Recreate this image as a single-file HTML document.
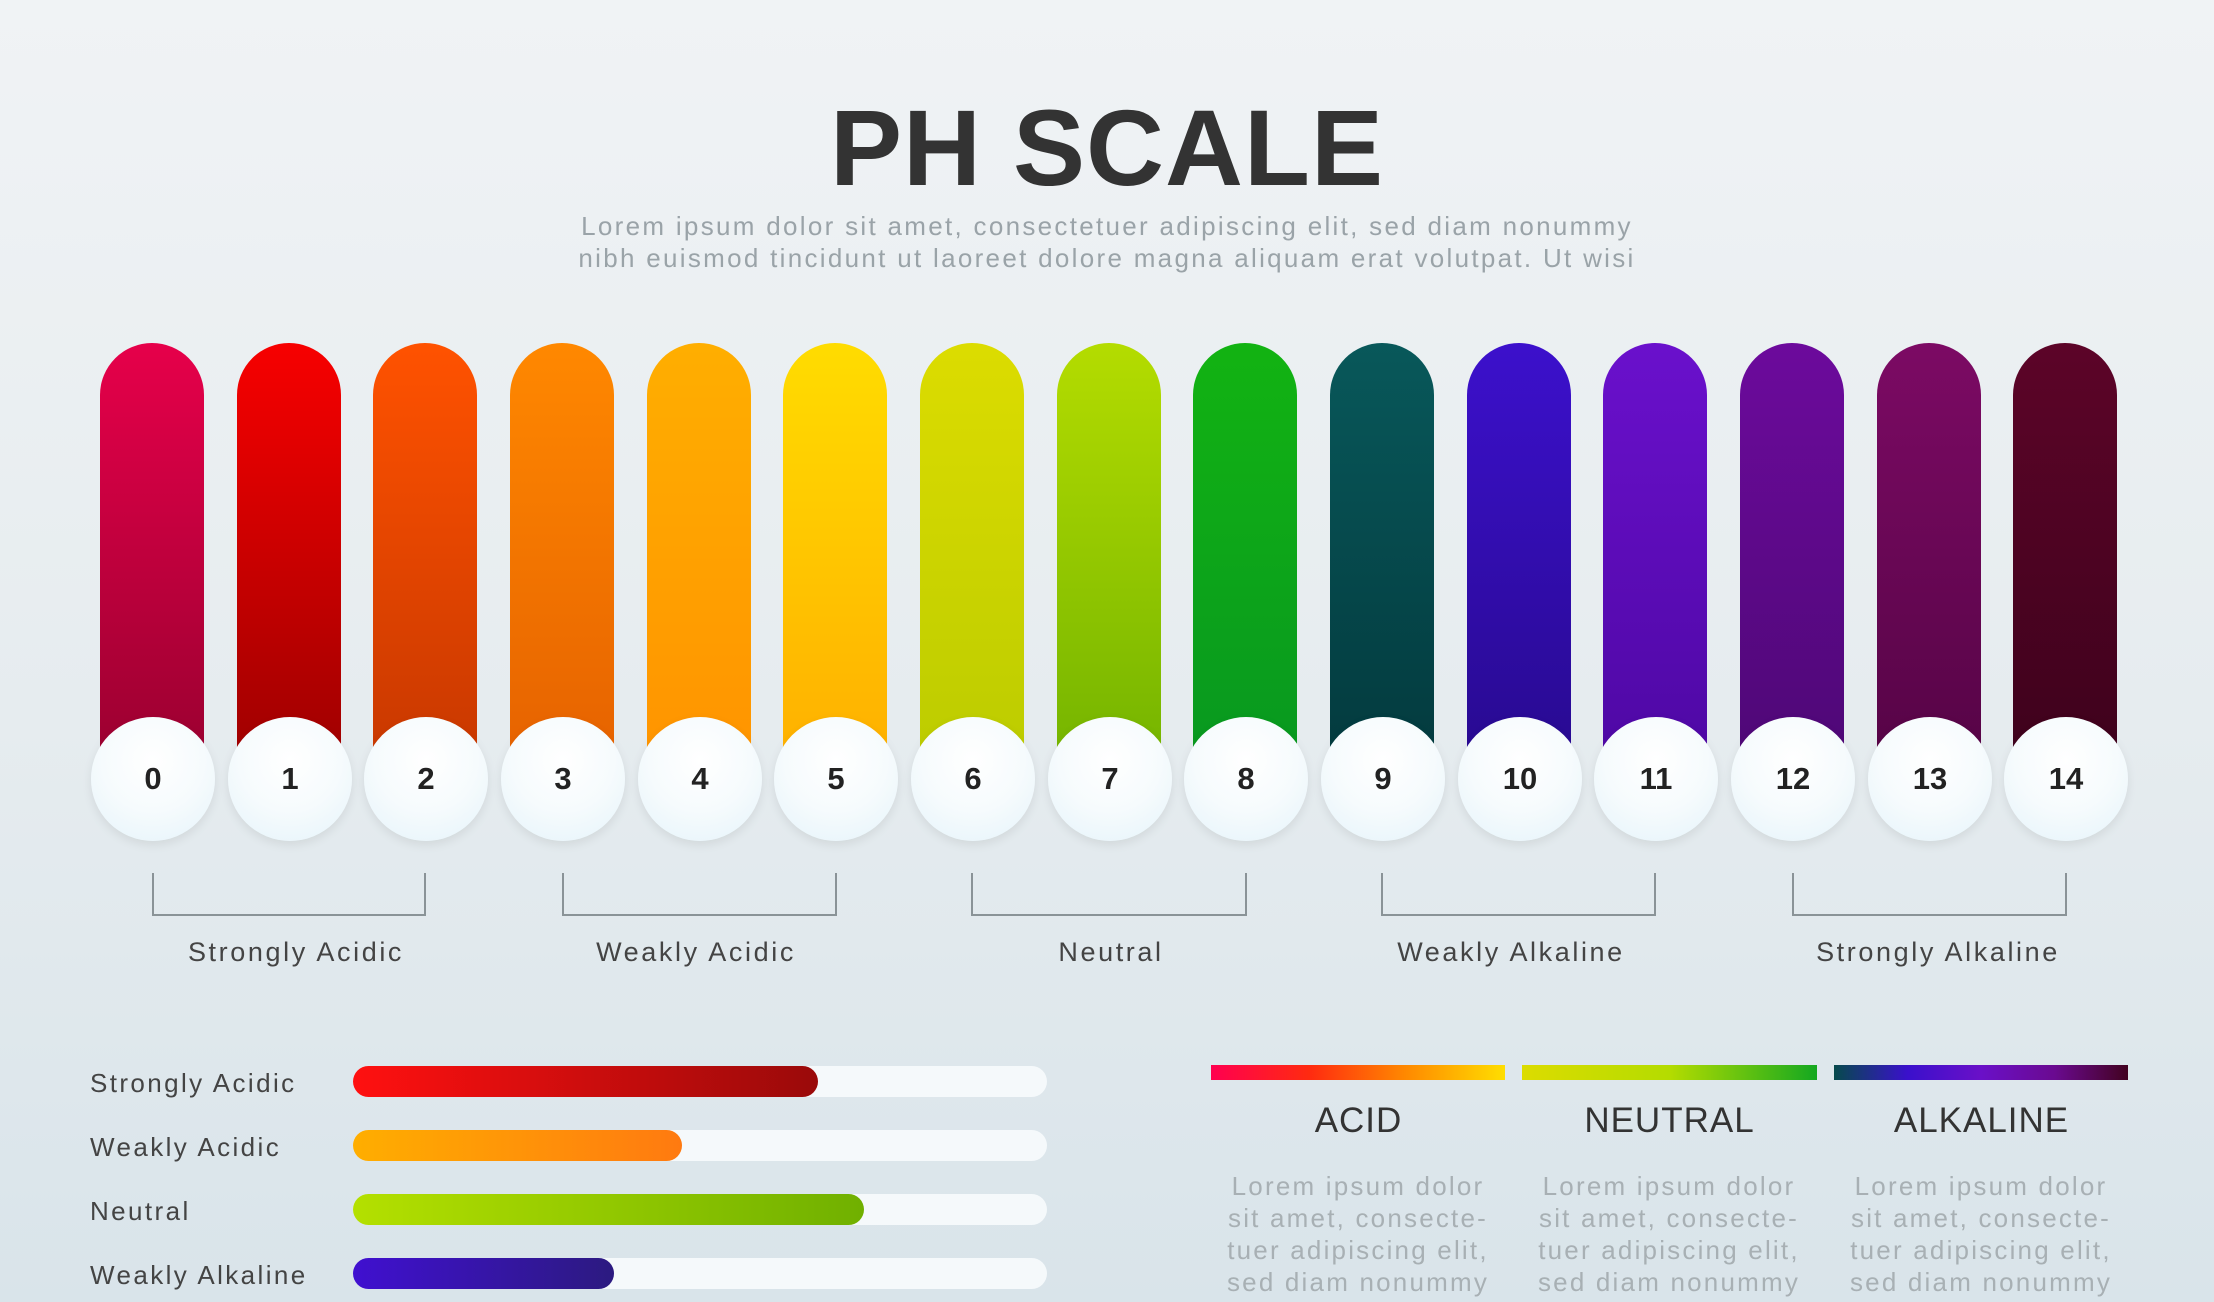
<!DOCTYPE html>
<html><head><meta charset="utf-8"><style>
*{margin:0;padding:0;box-sizing:border-box}
body{width:2214px;height:1302px;overflow:hidden;background:linear-gradient(180deg,#f0f3f5 0%,#e6ecef 55%,#d9e4ea 100%);font-family:"Liberation Sans",sans-serif;position:relative;color:#333}
h1{position:absolute;left:0;width:2214px;top:88px;text-align:center;font-size:108px;font-weight:bold;color:#333;letter-spacing:1px;line-height:120px}
.sub{position:absolute;left:0;width:2214px;text-align:center;font-size:26px;color:#9aa3a8;letter-spacing:2.3px;line-height:32px}
.bar{position:absolute;top:343px;width:104px;height:420px;border-radius:52px 52px 0 0}
.circ{position:absolute;width:124px;height:124px;border-radius:50%;background:radial-gradient(circle at 50% 35%,#ffffff 0%,#f6fbfd 50%,#e4f3fa 100%);box-shadow:0 4px 10px rgba(0,0,0,0.08);text-align:center;line-height:124px;font-weight:bold;font-size:31px;color:#222;top:717px}
.br{position:absolute;top:873px;height:43px;border:2px solid #8a9397;border-top:none}
.bl{position:absolute;top:937px;font-size:27px;color:#444;text-align:center;width:400px;letter-spacing:2.6px}
.ll{position:absolute;left:90px;font-size:26px;color:#444;letter-spacing:2.4px}
.track{position:absolute;left:353px;width:694px;height:31px;border-radius:16px;background:#f5f9fb}
.fill{position:absolute;left:0;top:0;height:31px;border-radius:16px}
.strip{position:absolute;top:1065px;height:15px}
.hd{position:absolute;top:1101px;font-size:35px;color:#333;text-align:center;width:295px;letter-spacing:1px}
.pp{position:absolute;top:1170px;font-size:26px;color:#a8b0b4;text-align:center;width:340px;line-height:32px;letter-spacing:2.2px}
</style></head><body>
<h1>PH SCALE</h1>
<div class="sub" style="top:210px">Lorem ipsum dolor sit amet, consectetuer adipiscing elit, sed diam nonummy</div>
<div class="sub" style="top:242px">nibh euismod tincidunt ut laoreet dolore magna aliquam erat volutpat. Ut wisi</div>

<div class="bar" style="left:100px;background:linear-gradient(#e6004a,#9a0030)"></div>
<div class="bar" style="left:237px;background:linear-gradient(#f70000,#9e0000)"></div>
<div class="bar" style="left:373px;background:linear-gradient(#ff5200,#c83800)"></div>
<div class="bar" style="left:510px;background:linear-gradient(#ff8800,#e66200)"></div>
<div class="bar" style="left:647px;background:linear-gradient(#ffae00,#ff9400)"></div>
<div class="bar" style="left:783px;background:linear-gradient(#ffdc00,#ffb000)"></div>
<div class="bar" style="left:920px;background:linear-gradient(#dcdc00,#bccc00)"></div>
<div class="bar" style="left:1057px;background:linear-gradient(#b4dc00,#74b400)"></div>
<div class="bar" style="left:1193px;background:linear-gradient(#12b312,#089820)"></div>
<div class="bar" style="left:1330px;background:linear-gradient(#08585a,#033a3e)"></div>
<div class="bar" style="left:1467px;background:linear-gradient(#3c10cc,#280a90)"></div>
<div class="bar" style="left:1603px;background:linear-gradient(#6a10cc,#4e08a4)"></div>
<div class="bar" style="left:1740px;background:linear-gradient(#6c0a9c,#4e0876)"></div>
<div class="bar" style="left:1877px;background:linear-gradient(#7c0a64,#560446)"></div>
<div class="bar" style="left:2013px;background:linear-gradient(#5c0428,#3e021c)"></div>

<div class="circ" style="left:91px">0</div>
<div class="circ" style="left:228px">1</div>
<div class="circ" style="left:364px">2</div>
<div class="circ" style="left:501px">3</div>
<div class="circ" style="left:638px">4</div>
<div class="circ" style="left:774px">5</div>
<div class="circ" style="left:911px">6</div>
<div class="circ" style="left:1048px">7</div>
<div class="circ" style="left:1184px">8</div>
<div class="circ" style="left:1321px">9</div>
<div class="circ" style="left:1458px">10</div>
<div class="circ" style="left:1594px">11</div>
<div class="circ" style="left:1731px">12</div>
<div class="circ" style="left:1868px">13</div>
<div class="circ" style="left:2004px">14</div>

<div class="br" style="left:152px;width:274px"></div>
<div class="br" style="left:562px;width:275px"></div>
<div class="br" style="left:971px;width:276px"></div>
<div class="br" style="left:1381px;width:275px"></div>
<div class="br" style="left:1792px;width:275px"></div>
<div class="bl" style="left:96px">Strongly Acidic</div>
<div class="bl" style="left:496px">Weakly Acidic</div>
<div class="bl" style="left:911px">Neutral</div>
<div class="bl" style="left:1311px">Weakly Alkaline</div>
<div class="bl" style="left:1738px">Strongly Alkaline</div>

<div class="ll" style="top:1068px">Strongly Acidic</div>
<div class="ll" style="top:1132px">Weakly Acidic</div>
<div class="ll" style="top:1196px">Neutral</div>
<div class="ll" style="top:1260px">Weakly Alkaline</div>
<div class="track" style="top:1066px"><div class="fill" style="width:465px;background:linear-gradient(90deg,#ff1010,#9a0a0a)"></div></div>
<div class="track" style="top:1130px"><div class="fill" style="width:329px;background:linear-gradient(90deg,#ffae00,#ff7a10)"></div></div>
<div class="track" style="top:1194px"><div class="fill" style="width:511px;background:linear-gradient(90deg,#b4e000,#70b000)"></div></div>
<div class="track" style="top:1258px"><div class="fill" style="width:261px;background:linear-gradient(90deg,#4010d0,#2c1a80)"></div></div>

<div class="strip" style="left:1211px;width:294px;background:linear-gradient(90deg,#ff0050,#ff2a10,#ff8a00,#ffde00)"></div>
<div class="strip" style="left:1522px;width:295px;background:linear-gradient(90deg,#dcdc00,#b4dc00,#14a820)"></div>
<div class="strip" style="left:1834px;width:294px;background:linear-gradient(90deg,#064a4c,#3a10cc,#6a10c8,#6a0a90,#420220)"></div>
<div class="hd" style="left:1211px">ACID</div>
<div class="hd" style="left:1522px">NEUTRAL</div>
<div class="hd" style="left:1834px">ALKALINE</div>
<div class="pp" style="left:1188px">Lorem ipsum dolor<br>sit amet, consecte-<br>tuer adipiscing elit,<br>sed diam nonummy</div>
<div class="pp" style="left:1499px">Lorem ipsum dolor<br>sit amet, consecte-<br>tuer adipiscing elit,<br>sed diam nonummy</div>
<div class="pp" style="left:1811px">Lorem ipsum dolor<br>sit amet, consecte-<br>tuer adipiscing elit,<br>sed diam nonummy</div>
</body></html>
